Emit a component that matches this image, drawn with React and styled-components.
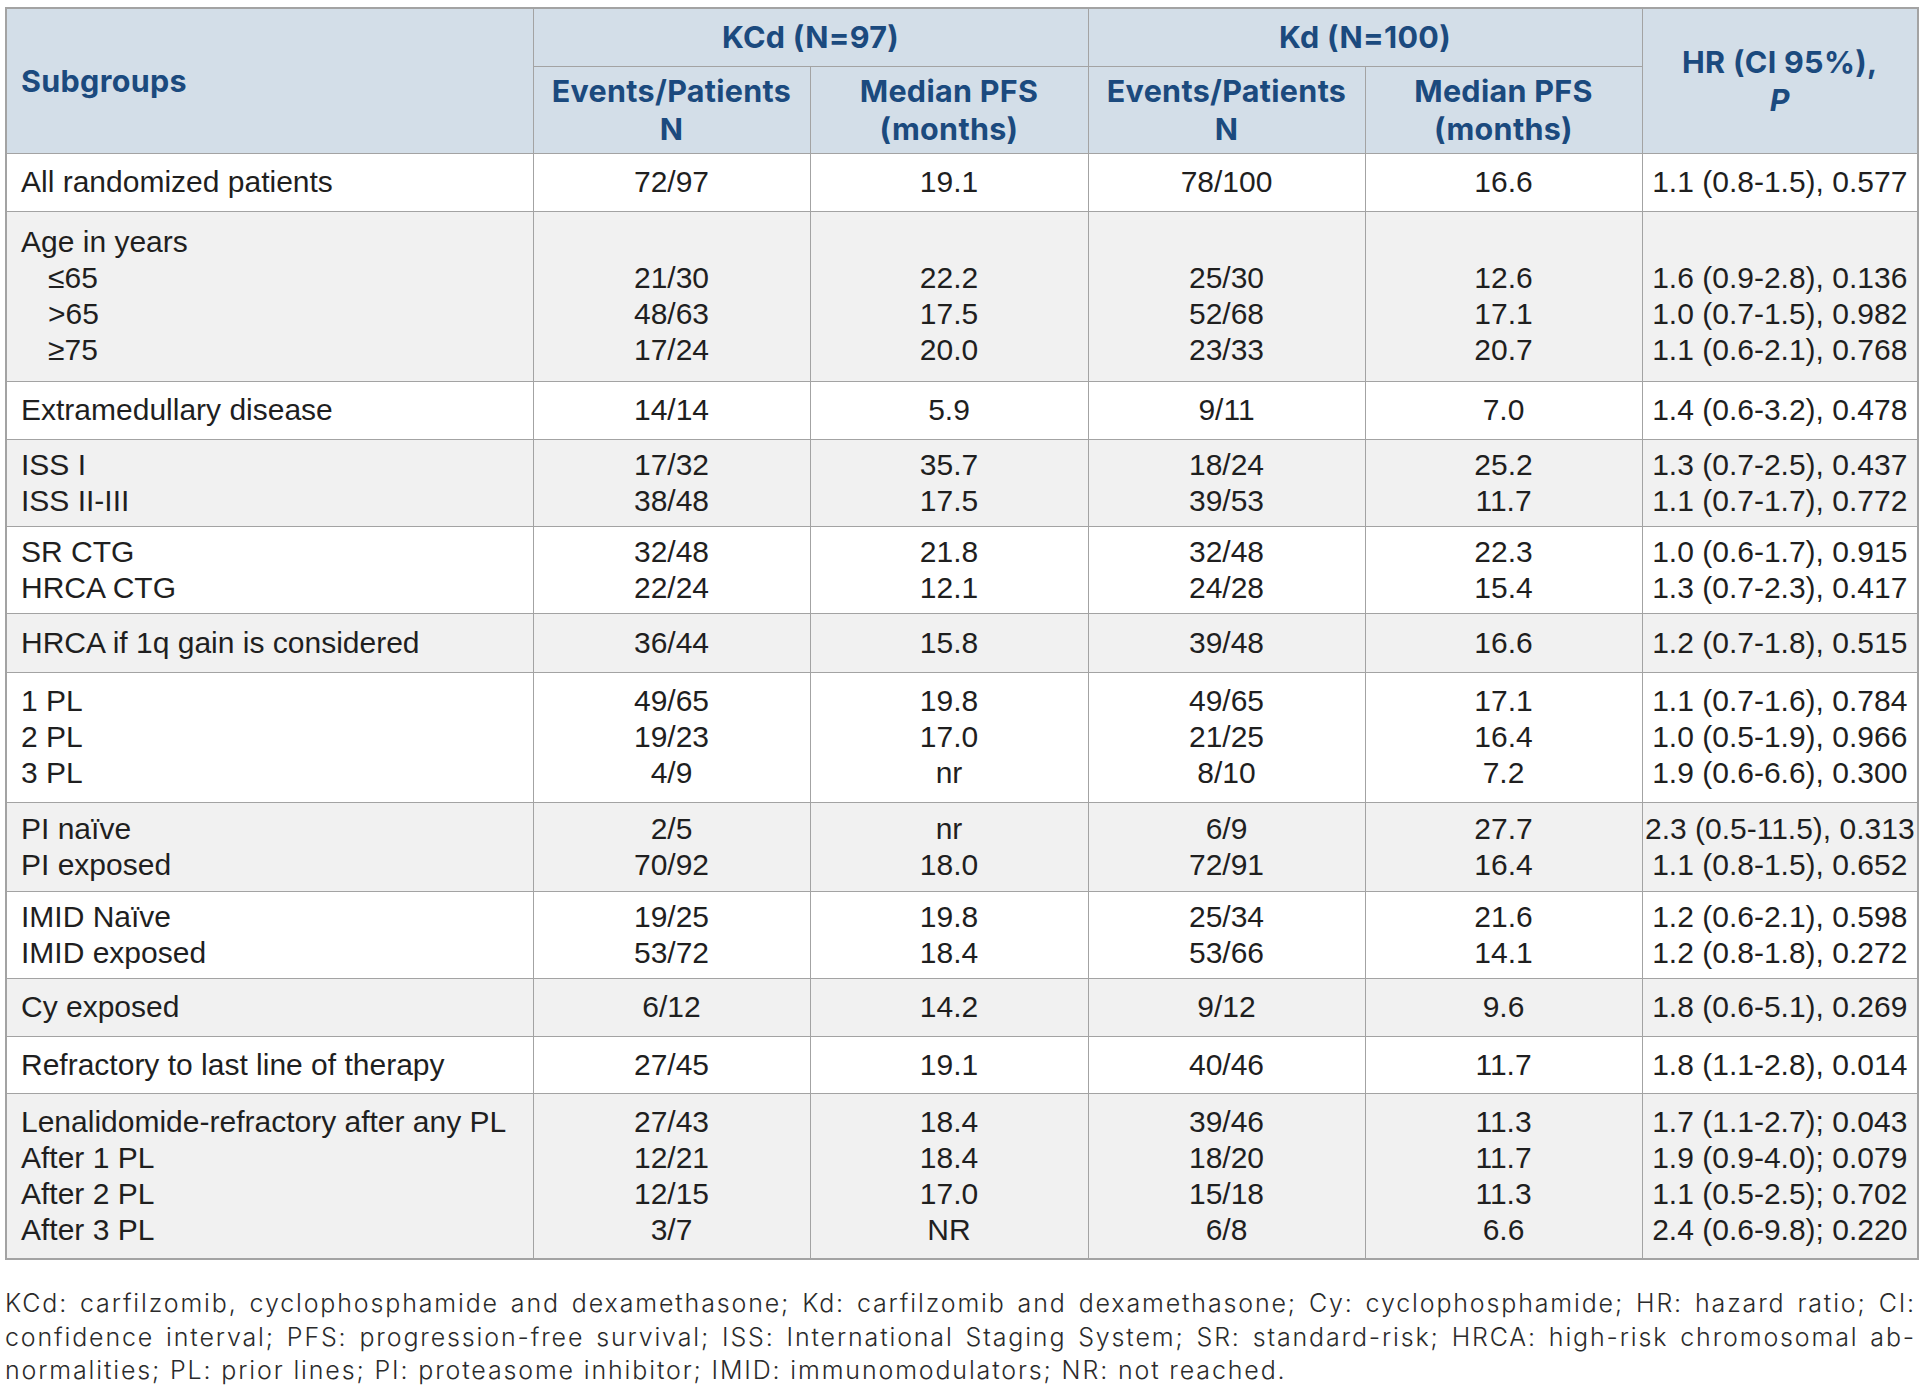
import React from "react";
import styled, { createGlobalStyle } from "styled-components";

const GlobalStyle = createGlobalStyle`
  html, body {
    margin: 0;
    padding: 0;
    background: #ffffff;
  }
`;

const Page = styled.div`
  padding: 7px 5px 20px 5px;
  width: 1913px;
`;

const Table = styled.table`
  width: 1912px;
  table-layout: fixed;
  border-collapse: collapse;
  border: 2px solid #a3a3a3;
  font-family: "Liberation Sans", Arial, sans-serif;
  font-size: 30px;
  color: #1f1f1f;
`;

const HeadRow = styled.tr`
  height: ${(p) => p.$h}px;
  background: #d3dee8;
`;

const HeadCell = styled.th`
  border: 1px solid #a3a3a3;
  padding: 0 2px;
  font-family: Inter, "Liberation Sans", sans-serif;
  font-weight: 700;
  font-size: 30.5px;
  line-height: 38px;
  letter-spacing: 0.3px;
  color: #1b4a7e;
  text-align: ${(p) => (p.$left ? "left" : "center")};
  padding-left: ${(p) => (p.$left ? "14px" : "2px")};
  vertical-align: middle;
  white-space: nowrap;
`;

const Italic = styled.i`
  font-style: italic;
`;

const BodyRow = styled.tr`
  height: ${(p) => p.$h}px;
  background: ${(p) => (p.$shade ? "#f1f1f1" : "#ffffff")};
`;

const Cell = styled.td`
  border: 1px solid #a3a3a3;
  padding: ${(p) => (p.$label ? "0 6px 0 14px" : "0")};
  line-height: 36px;
  text-align: ${(p) => (p.$label ? "left" : "center")};
  vertical-align: middle;
  white-space: nowrap;
`;

const Line = styled.div`
  padding-left: ${(p) => (p.$indent ? "27px" : "0")};
`;

const Footnote = styled.div`
  margin-top: 27px;
  font-family: Inter, "Liberation Sans", sans-serif;
  font-weight: 300;
  font-size: 25px;
  letter-spacing: 1.85px;
  line-height: 33.5px;
  color: #2b2b2b;
  width: 1911px;
`;

const FootLine = styled.div`
  white-space: nowrap;
  text-align: justify;
  text-align-last: ${(p) => (p.$last ? "left" : "justify")};
`;

const rows = [
  {
    h: 58,
    label: ["All randomized patients"],
    cols: [["72/97"], ["19.1"], ["78/100"], ["16.6"], ["1.1 (0.8-1.5), 0.577"]],
  },
  {
    h: 170,
    label: ["Age in years", "≤65", ">65", "≥75"],
    indent: [false, true, true, true],
    cols: [
      ["", "21/30", "48/63", "17/24"],
      ["", "22.2", "17.5", "20.0"],
      ["", "25/30", "52/68", "23/33"],
      ["", "12.6", "17.1", "20.7"],
      ["", "1.6 (0.9-2.8), 0.136", "1.0 (0.7-1.5), 0.982", "1.1 (0.6-2.1), 0.768"],
    ],
  },
  {
    h: 58,
    label: ["Extramedullary disease"],
    cols: [["14/14"], ["5.9"], ["9/11"], ["7.0"], ["1.4 (0.6-3.2), 0.478"]],
  },
  {
    h: 87,
    label: ["ISS I", "ISS II-III"],
    cols: [
      ["17/32", "38/48"],
      ["35.7", "17.5"],
      ["18/24", "39/53"],
      ["25.2", "11.7"],
      ["1.3 (0.7-2.5), 0.437", "1.1 (0.7-1.7), 0.772"],
    ],
  },
  {
    h: 87,
    label: ["SR CTG", "HRCA CTG"],
    cols: [
      ["32/48", "22/24"],
      ["21.8", "12.1"],
      ["32/48", "24/28"],
      ["22.3", "15.4"],
      ["1.0 (0.6-1.7), 0.915", "1.3 (0.7-2.3), 0.417"],
    ],
  },
  {
    h: 59,
    label: ["HRCA if 1q gain is considered"],
    cols: [["36/44"], ["15.8"], ["39/48"], ["16.6"], ["1.2 (0.7-1.8), 0.515"]],
  },
  {
    h: 130,
    label: ["1 PL", "2 PL", "3 PL"],
    cols: [
      ["49/65", "19/23", "4/9"],
      ["19.8", "17.0", "nr"],
      ["49/65", "21/25", "8/10"],
      ["17.1", "16.4", "7.2"],
      ["1.1 (0.7-1.6), 0.784", "1.0 (0.5-1.9), 0.966", "1.9 (0.6-6.6), 0.300"],
    ],
  },
  {
    h: 89,
    label: ["PI naïve", "PI exposed"],
    cols: [
      ["2/5", "70/92"],
      ["nr", "18.0"],
      ["6/9", "72/91"],
      ["27.7", "16.4"],
      ["2.3 (0.5-11.5), 0.313", "1.1 (0.8-1.5), 0.652"],
    ],
  },
  {
    h: 87,
    label: ["IMID Naïve", "IMID exposed"],
    cols: [
      ["19/25", "53/72"],
      ["19.8", "18.4"],
      ["25/34", "53/66"],
      ["21.6", "14.1"],
      ["1.2 (0.6-2.1), 0.598", "1.2 (0.8-1.8), 0.272"],
    ],
  },
  {
    h: 58,
    label: ["Cy exposed"],
    cols: [["6/12"], ["14.2"], ["9/12"], ["9.6"], ["1.8 (0.6-5.1), 0.269"]],
  },
  {
    h: 57,
    label: ["Refractory to last line of therapy"],
    cols: [["27/45"], ["19.1"], ["40/46"], ["11.7"], ["1.8 (1.1-2.8), 0.014"]],
  },
  {
    h: 166,
    label: ["Lenalidomide-refractory after any PL", "After 1 PL", "After 2 PL", "After 3 PL"],
    cols: [
      ["27/43", "12/21", "12/15", "3/7"],
      ["18.4", "18.4", "17.0", "NR"],
      ["39/46", "18/20", "15/18", "6/8"],
      ["11.3", "11.7", "11.3", "6.6"],
      ["1.7 (1.1-2.7); 0.043", "1.9 (0.9-4.0); 0.079", "1.1 (0.5-2.5); 0.702", "2.4 (0.6-9.8); 0.220"],
    ],
  },
];

const Lines = ({ items, indent }) =>
  items.map((t, i) => (
    <Line key={i} $indent={indent && indent[i]}>
      {t === "" ? "\u00a0" : t}
    </Line>
  ));

export default function App() {
  return (
    <Page>
      <GlobalStyle />
      <Table>
        <colgroup>
          <col style={{ width: 527 }} />
          <col style={{ width: 277 }} />
          <col style={{ width: 278 }} />
          <col style={{ width: 277 }} />
          <col style={{ width: 277 }} />
          <col style={{ width: 276 }} />
        </colgroup>
        <thead>
          <HeadRow $h={58}>
            <HeadCell rowSpan={2} $left>
              Subgroups
            </HeadCell>
            <HeadCell colSpan={2}>KCd (N=97)</HeadCell>
            <HeadCell colSpan={2}>Kd (N=100)</HeadCell>
            <HeadCell rowSpan={2}>
              HR (CI 95%),
              <br />
              <Italic>P</Italic>
            </HeadCell>
          </HeadRow>
          <HeadRow $h={87}>
            <HeadCell>
              Events/Patients
              <br />N
            </HeadCell>
            <HeadCell>
              Median PFS
              <br />
              (months)
            </HeadCell>
            <HeadCell>
              Events/Patients
              <br />N
            </HeadCell>
            <HeadCell>
              Median PFS
              <br />
              (months)
            </HeadCell>
          </HeadRow>
        </thead>
        <tbody>
          {rows.map((r, i) => (
            <BodyRow key={i} $h={r.h} $shade={i % 2 === 1}>
              <Cell $label>
                <Lines items={r.label} indent={r.indent} />
              </Cell>
              {r.cols.map((c, j) => (
                <Cell key={j}>
                  <Lines items={c} />
                </Cell>
              ))}
            </BodyRow>
          ))}
        </tbody>
      </Table>
      <Footnote>
        <FootLine>
          KCd: carfilzomib, cyclophosphamide and dexamethasone; Kd: carfilzomib and dexamethasone; Cy: cyclophosphamide; HR: hazard ratio; CI:
        </FootLine>
        <FootLine>
          confidence interval; PFS: progression-free survival; ISS: International Staging System; SR: standard-risk; HRCA: high-risk chromosomal ab-
        </FootLine>
        <FootLine $last>
          normalities; PL: prior lines; PI: proteasome inhibitor; IMID: immunomodulators; NR: not reached.
        </FootLine>
      </Footnote>
    </Page>
  );
}
